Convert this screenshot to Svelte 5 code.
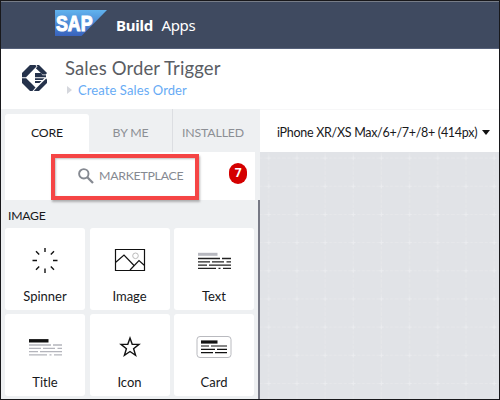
<script>
  const components = ['Spinner', 'Image', 'Text', 'Title', 'Icon', 'Card'];
</script>

{#snippet lines(color)}
  <path d="M0 0H22M24 0H33M0 3.3H12M14 3.3H26M28.500 3.3H33M0 6.600H9M11 6.600H33M0 9.900H18M20.500 9.900H22.500M25 9.900H33" stroke={color} stroke-width="1.3" />
{/snippet}

<div class="window">
  <header>
    <svg class="sap" width="52" height="26" viewBox="0 0 52 26">
      <defs>
        <linearGradient id="sapblue" x1="0" y1="0" x2="0" y2="1">
          <stop offset="0" stop-color="#61b3ee" />
          <stop offset="1" stop-color="#3862bd" />
        </linearGradient>
      </defs>
      <path d="M0 0H52L26.500 26H0Z" fill="url(#sapblue)" />
      <text x="1" y="21" textLength="36.500" lengthAdjust="spacingAndGlyphs">SAP</text>
    </svg>
    <strong>Build</strong>
    <span class="apps">Apps</span>
  </header>

  <section class="project">
    <svg class="mark" width="25" height="26" viewBox="0 0 25 26">
      <g fill="#25324b">
        <path d="M8 0H13.500L14.500 1.500L4 12.300H0V8Z" />
        <path d="M0 13.300H4.200L13.500 22.500L10.500 26H8L0 18Z" />
        <path d="M14.500 0H17L25 8L23.800 9.500H20.500L13.800 3.200L15.500 1.500Z" />
        <path d="M13 8H19L20.500 10.200H24V12.300H13ZM13 13.300H22.500L20.500 15H13ZM13 16H19.500L17.500 18H13Z" />
        <path d="M24.200 13.500L25 14.500V18L17 26H11.800L15 22.500L20.500 17Z" />
      </g>
    </svg>
    <div>
      <h1>Sales Order Trigger</h1>
      <div class="crumb"><i></i><span>Create Sales Order</span></div>
    </div>
  </section>

  <main>
    <aside>
      <nav>
        <span class="tab active">CORE</span>
        <span class="tab byme">BY ME</span>
        <span class="tab installed">INSTALLED</span>
      </nav>
      <div class="market">
        <svg width="17" height="17" viewBox="0 0 17 17" fill="none" stroke="#858991">
          <circle cx="5.800" cy="5.800" r="4.700" stroke-width="1.900" />
          <path d="M9.300 9.300L15 15" stroke-width="2.300" />
        </svg>
        <span>MARKETPLACE</span>
        <b class="badge">7</b>
        <div class="callout"></div>
      </div>
      <h2>IMAGE</h2>
      <div class="cards">
        {#each components as name}
          <div class="card">
            <svg width="40" height="30" viewBox="0 0 40 30" fill="none" stroke="#111">
              {#if name === 'Spinner'}
                <path d="M20 3V7M20 23.500V28M7.500 15.500H12M28 15.500H32.500M11 6.300L14.200 9.500M25.800 9.500L29 6.300M11 24.700L14.200 21.500M25.800 21.500L29 24.700" stroke-width="1.400" />
              {:else if name === 'Image'}
                <circle cx="25.500" cy="10.800" r="2.800" stroke="#bbb" />
                <path d="M5.500 4.500H34.500V25.500H5.500ZM5.500 17.500L14 10L24.500 21M20 25L29 15.500L34.500 20.500" stroke-width="1.200" />
              {:else if name === 'Text'}
                <path d="M4 9.300H23.500" stroke="#b7b8bf" stroke-width="3" />
                <g transform="translate(4 13.500)">{@render lines('#222')}</g>
              {:else if name === 'Title'}
                <path d="M4 9.800H23.500" stroke-width="3.400" />
                <g transform="translate(4 14)">{@render lines('#b4b5bc')}</g>
              {:else if name === 'Icon'}
                <path d="M20 7L22.200 13.200L29 13.400L23.600 17.700L25.600 24.300L20 20.500L14.400 24.300L16.400 17.700L11 13.400L17.800 13.200Z" stroke-width="1.400" />
              {:else}
                <rect x="3" y="5.500" width="34" height="21" rx="3" stroke="#b9babf" />
                <path d="M7 11H23.500" stroke-width="3.200" />
                <path d="M7 15H15M17 15H33M7 18.300H21M23 18.300H33M7 21.600H19M21 21.600H33" stroke-width="1.200" />
              {/if}
            </svg>
            <span>{name}</span>
          </div>
        {/each}
      </div>
    </aside>

    <section class="preview">
      <div class="device"><span>iPhone XR/XS Max/6+/7+/8+ (414px)</span><i></i></div>
      <div class="canvas">
        <svg width="239" height="247">
          <defs>
            <pattern id="grid" x="-5.200" y="-8" width="28.170" height="28.170" patternUnits="userSpaceOnUse">
              <path d="M0 14H28.170M14 0V28.170" stroke="#e6e7ea" stroke-dasharray="3 1.500" />
              <path d="M12 14H16M14 12V16" stroke="#ebecef" />
            </pattern>
          </defs>
          <rect width="239" height="247" fill="url(#grid)" />
        </svg>
      </div>
    </section>
  </main>
</div>

<style>
  .window { box-sizing: border-box; width: 500px; height: 400px; border: 1px solid #18181b; display: flex; flex-direction: column; overflow: hidden; background: white; font-family: Lato, sans-serif; color: #17181b; }
  svg { display: block; flex: none; }
  span, strong, h1, h2 { white-space: nowrap; }
  header { box-sizing: border-box; height: 48px; flex: none; background: #3f4a60; border-top: 1px solid #777d88; border-bottom: 1px solid #56617a; display: flex; padding: 8px 0 0 54px; color: white; font-family: "Noto Sans", sans-serif; font-size: 15px; line-height: 30px; }
  .sap text { font: bold 21.500px "Liberation Sans", sans-serif; fill: white; stroke: white; stroke-width: 1.1; }
  strong { margin-left: 9px; width: 45.500px; letter-spacing: -.25px; }
  .apps { letter-spacing: -.35px; }
  .project { height: 60px; flex: none; display: flex; }
  .mark { margin: 16px 0 0 21px; }
  .project > div { margin: 7px 0 0 18px; }
  h1 { margin: 0; font-size: 18.500px; line-height: 24px; font-weight: 400; letter-spacing: .12px; color: #5a5d64; }
  .crumb { display: flex; align-items: center; font-size: 13px; line-height: 20px; letter-spacing: .1px; color: #67abf5; }
  .crumb i { width: 0; height: 0; margin: 0 6px 0 2px; border-left: 5px solid #d5d7dd; border-top: 4px solid transparent; border-bottom: 4px solid transparent; }
  main { display: flex; flex: 1; min-height: 0; }
  aside { width: 258.500px; background: #eef0f2; flex: none; position: relative; }
  aside::after { content: ""; position: absolute; right: 0; top: 91px; bottom: 0; width: 1.500px; background: #777985; }
  nav { display: flex; height: 43px; padding-left: 4px; }
  .tab { box-sizing: border-box; padding-top: 5px; line-height: 37px; text-align: center; font-size: 12.300px; letter-spacing: -.15px; color: #8c8f95; }
  .active { width: 84px; margin-top: 5px; padding: 0; background: white; color: #17181b; border-radius: 3px 3px 0 0; }
  .byme { width: 84px; border-right: 1px solid #dcdee2; }
  .installed { width: 80px; }
  .market { position: relative; box-sizing: border-box; width: 250px; height: 48px; margin-left: 4px; padding: 16px 0 0 73px; display: flex; background: white; color: #858991; font-size: 12.300px; line-height: 16px; letter-spacing: -.25px; }
  .market > span { margin-left: 4px; }
  .badge { position: absolute; left: 224px; top: 11px; width: 18px; height: 21px; border-radius: 9px; background: #d40000; color: white; font: bold 12px/20px "Noto Sans", sans-serif; text-align: center; }
  .callout { position: absolute; box-sizing: border-box; left: 46px; top: 2px; width: 148px; height: 46px; border: 4px solid #f54545; box-shadow: 1px 2px 2px #7778, inset 1px 1px 2px #7777; }
  h2 { margin: 0; padding-left: 7px; height: 28px; font-size: 12.200px; line-height: 31px; font-weight: 400; letter-spacing: -.25px; }
  .cards { display: grid; grid-template-columns: repeat(3, 80px); grid-auto-rows: 82px; gap: 4px 4.500px; padding-left: 4px; }
  .card { box-sizing: border-box; background: white; border-radius: 3px; display: flex; flex-direction: column; align-items: center; padding-top: 17px; font-size: 13px; line-height: 18px; }
  .card span { margin-top: 12px; }
  .preview { flex: 1; display: flex; flex-direction: column; }
  .device { height: 43px; padding-top: 2px; box-sizing: border-box; border-top: 1px solid #f7f7f8; display: flex; align-items: center; padding-left: 17.500px; font-size: 12.500px; letter-spacing: -.29px; }
  .device i { width: 0; margin-left: 5px; border-top: 5px solid #111; border-left: 4.500px solid transparent; border-right: 4.500px solid transparent; }
  .canvas { flex: 1; min-height: 0; background: #e1e3e7; overflow: hidden; }
</style>
